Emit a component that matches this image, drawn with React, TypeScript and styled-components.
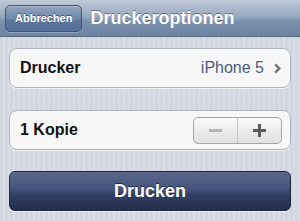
import React, { useState } from "react";
import styled, { createGlobalStyle } from "styled-components";

const GlobalStyle = createGlobalStyle`
	html, body {
		margin: 0;
		padding: 0;
	}
	body {
		font-family: "Liberation Sans", Arial, sans-serif;
	}
`;

const Screen = styled.div`
	width: 300px;
	height: 221px;
	overflow: hidden;
	display: flex;
	flex-direction: column;
	background: repeating-linear-gradient(
		90deg,
		#d2d6df 0px,
		#d2d6df 3px,
		#d9dde5 3px,
		#d9dde5 5px
	);
`;

const NavBar = styled.div`
	height: 36px;
	flex-shrink: 0;
	display: flex;
	align-items: center;
	gap: 8px;
	padding: 0 5px;
	background: linear-gradient(to bottom, #c0cad8 0%, #98a9c0 45%, #7a90ad 60%, #6c83a2 100%);
	border-bottom: 1px solid #55637a;
`;

const NavButton = styled.button`
	height: 27px;
	padding: 0 9px;
	border-radius: 5px;
	border: 1px solid #41536d;
	background: linear-gradient(to bottom, #93a5bf 0%, #7089aa 50%, #5d7699 60%, #55709a 100%);
	box-shadow: inset 0 1px 0 rgba(255, 255, 255, 0.25), 0 1px 0 rgba(255, 255, 255, 0.25);
	color: #fff;
	font-family: "Liberation Sans", Arial, sans-serif;
	font-weight: bold;
	font-size: 11px;
	text-shadow: 0 -1px 0 rgba(0, 0, 0, 0.45);
`;

const Title = styled.h1`
	margin: 0;
	color: #fff;
	font-size: 18px;
	font-weight: bold;
	text-shadow: 0 -1px 0 rgba(0, 0, 0, 0.4);
`;

const Content = styled.div`
	display: flex;
	flex-direction: column;
	padding: 11px 9px 0;
`;

const Card = styled.div<{ $gap: number }>`
	height: 38px;
	margin-bottom: ${(p) => p.$gap}px;
	display: flex;
	align-items: center;
	justify-content: space-between;
	padding: 0 9px 0 10px;
	background: #f7f7f7;
	border: 1px solid #aeb3bb;
	border-radius: 8px;
	box-shadow: 0 1px 0 rgba(255, 255, 255, 0.7);
`;

const Label = styled.span`
	font-size: 16px;
	font-weight: bold;
	color: #111;
`;

const Detail = styled.span`
	display: flex;
	align-items: center;
	gap: 10px;
	font-size: 16px;
	color: #4b5b80;
`;

const Stepper = styled.div`
	display: flex;
	width: 87px;
	height: 25px;
	margin-right: -1px;
	border: 1px solid #a3a7ad;
	border-radius: 5px;
	overflow: hidden;
	background: linear-gradient(to bottom, #fafafa 0%, #ececec 50%, #e0e0e0 100%);
`;

const StepButton = styled.button<{ $dim?: boolean }>`
	flex: 1;
	border: none;
	padding: 0;
	background: transparent;
	display: flex;
	align-items: center;
	justify-content: center;
	color: ${(p) => (p.$dim ? "#b4b4b4" : "#5b5b5b")};
	& + & {
		border-left: 1px solid #c6c6c6;
	}
`;

const PrintButton = styled.button`
	height: 40px;
	border-radius: 6px;
	border: 1px solid #1e283c;
	background: linear-gradient(to bottom, #5a688c 0%, #44537a 45%, #323f63 60%, #242f4d 100%);
	box-shadow: 0 1px 0 rgba(255, 255, 255, 0.6);
	color: #fff;
	font-family: "Liberation Sans", Arial, sans-serif;
	font-size: 18px;
	font-weight: bold;
	text-shadow: 0 -1px 0 rgba(0, 0, 0, 0.5);
`;

const Chevron = () => (
	<svg width="7" height="11" viewBox="0 0 7 11">
		<path d="M1.3 1.3 L5.2 5.5 L1.3 9.7" fill="none" stroke="#767676" strokeWidth="2.5" />
	</svg>
);

const Minus = () => (
	<svg width="13" height="3" viewBox="0 0 13 3">
		<rect width="13" height="3" fill="currentColor" />
	</svg>
);

const Plus = () => (
	<svg width="13" height="13" viewBox="0 0 13 13">
		<rect y="5" width="13" height="3" fill="currentColor" />
		<rect x="5" width="3" height="13" fill="currentColor" />
	</svg>
);

const App: React.FC = () => {
	const [copies, setCopies] = useState(1);

	return (
		<>
			<GlobalStyle />
			<Screen>
				<NavBar>
					<NavButton>Abbrechen</NavButton>
					<Title>Druckeroptionen</Title>
				</NavBar>
				<Content>
					<Card $gap={22}>
						<Label>Drucker</Label>
						<Detail>
							iPhone 5
							<Chevron />
						</Detail>
					</Card>
					<Card $gap={21}>
						<Label>
							{copies} {copies === 1 ? "Kopie" : "Kopien"}
						</Label>
						<Stepper>
							<StepButton $dim={copies <= 1} onClick={() => setCopies(Math.max(1, copies - 1))}>
								<Minus />
							</StepButton>
							<StepButton onClick={() => setCopies(copies + 1)}>
								<Plus />
							</StepButton>
						</Stepper>
					</Card>
					<PrintButton>Drucken</PrintButton>
				</Content>
			</Screen>
		</>
	);
};

export default App;
